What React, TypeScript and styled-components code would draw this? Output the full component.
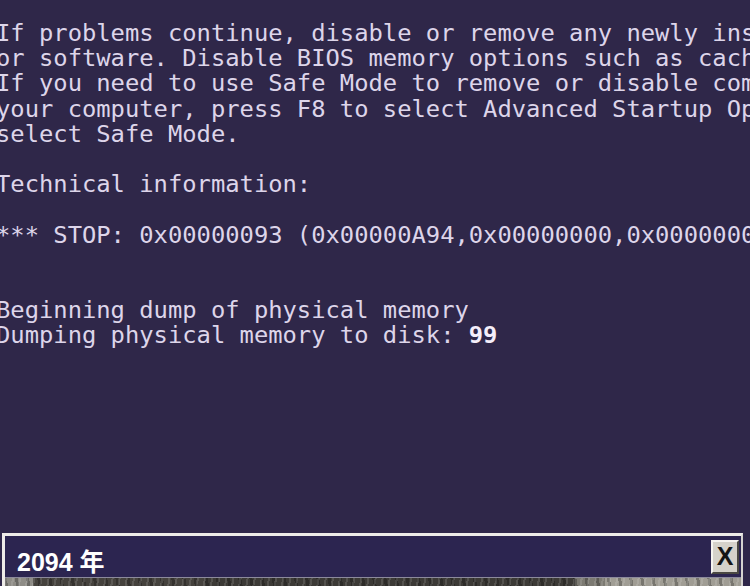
import React from "react";
import styled, { createGlobalStyle } from "styled-components";

const Global = createGlobalStyle`
  html, body { margin: 0; padding: 0; background: #2f2749; }
  #root { width: 750px; height: 586px; }
`;

const Screen = styled.div`
  width: 750px;
  height: 586px;
  overflow: hidden;
  background: #2f2749;
  display: flex;
  flex-direction: column;
`;

const Console = styled.pre`
  flex: 1;
  margin: 21px 0 0 -4px;
  font-family: "DejaVu Sans Mono", "Liberation Mono", monospace;
  font-size: 23.8px;
  line-height: 25.2px;
  color: #ddd5ea;
  white-space: pre;
`;

const Strong = styled.b`
  font-weight: bold;
  color: #f4eefa;
`;

const Dialog = styled.div`
  margin-left: 2px;
  width: 741px;
  box-sizing: border-box;
  border-top: 3px solid #eeece8;
  border-left: 3px solid #eeece8;
  border-right: 2px solid #d6d4d0;
  display: flex;
  flex-direction: column;
`;

const TitleBar = styled.div`
  height: 42px;
  box-sizing: border-box;
  background: #2c2550;
  border-bottom: 1px solid #8c8a9c;
  display: flex;
  align-items: center;
  justify-content: space-between;
  padding: 0 2px 0 12px;
`;

const Title = styled.span`
  padding-top: 6px;
  font-family: "Liberation Sans", "Noto Sans CJK SC", sans-serif;
  font-weight: bold;
  font-size: 25px;
  color: #ffffff;
`;

const CloseButton = styled.button`
  width: 28px;
  height: 34px;
  box-sizing: border-box;
  padding: 0;
  background: #d5d2ca;
  border: 2px solid;
  border-color: #f6f4f0 #4a4842 #4a4842 #f6f4f0;
  font-family: "Liberation Sans", sans-serif;
  font-weight: bold;
  font-size: 25px;
  line-height: 1;
  color: #141414;
  display: flex;
  align-items: center;
  justify-content: center;
`;

const Strip = styled.div`
  height: 8px;
  background:
    repeating-linear-gradient(100deg, rgba(255,255,255,0.12) 0 2px, transparent 2px 7px),
    repeating-linear-gradient(80deg, rgba(0,0,0,0.25) 0 3px, transparent 3px 11px),
    linear-gradient(90deg, #8e8c86 0 28px, #45423d 28px 200px, #3c3a36 200px 570px, #7c7a72 570px 600px, #a09d94 600px 100%);
`;

const lines = `If problems continue, disable or remove any newly ins
or software. Disable BIOS memory options such as cach
If you need to use Safe Mode to remove or disable com
your computer, press F8 to select Advanced Startup Op
select Safe Mode.

Technical information:

*** STOP: 0x00000093 (0x00000A94,0x00000000,0x0000000


Beginning dump of physical memory
Dumping physical memory to disk: `;

export default function App() {
  return (
    <>
      <Global />
      <Screen>
        <Console>
          {lines}
          <Strong>99</Strong>
        </Console>
        <Dialog>
          <TitleBar>
            <Title>2094 年</Title>
            <CloseButton aria-label="close">X</CloseButton>
          </TitleBar>
          <Strip />
        </Dialog>
      </Screen>
    </>
  );
}
